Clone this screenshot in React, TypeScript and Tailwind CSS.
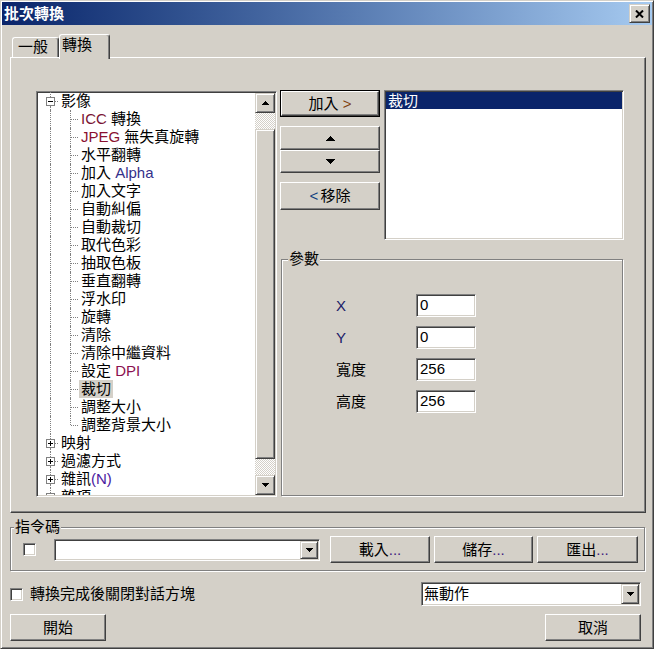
import React from "react";

// classic 3D edges
const raised =
  "border border-t-white border-l-white border-r-[#404040] border-b-[#404040] shadow-[inset_-1px_-1px_#808080]";
const raisedSb =
  "border border-t-[#d4d0c8] border-l-[#d4d0c8] border-r-[#404040] border-b-[#404040] shadow-[inset_1px_1px_#fff,inset_-1px_-1px_#808080]";
const sunken =
  "border border-t-[#808080] border-l-[#808080] border-r-white border-b-white shadow-[inset_1px_1px_#404040,inset_-1px_-1px_#d4d0c8]";
const etched = "border border-[#808080] shadow-[inset_1px_1px_#fff,1px_1px_#fff]";
const dot = "border-dotted border-[#808080]";

function Tri({ dir, w = 7 }: { dir: "up" | "down"; w?: number }) {
  const h = Math.ceil(w / 2);
  const pts = dir === "up" ? `0,${h} ${w},${h} ${w / 2},0` : `0,0 ${w},0 ${w / 2},${h}`;
  return (
    <svg width={w} height={h} viewBox={`0 0 ${w} ${h}`} shapeRendering="crispEdges">
      <polygon points={pts} fill="#000" />
    </svg>
  );
}

function Expander({ open }: { open: boolean }) {
  return (
    <svg width="9" height="9" viewBox="0 0 9 9" shapeRendering="crispEdges">
      <rect x="0.5" y="0.5" width="8" height="8" fill="#fff" stroke="#808080" />
      <line x1="2" y1="4.5" x2="7" y2="4.5" stroke="#000" />
      {!open && <line x1="4.5" y1="2" x2="4.5" y2="7" stroke="#000" />}
    </svg>
  );
}

function RootCell({ open }: { open: boolean }) {
  return (
    <div className="flex h-[18px] w-[20px] shrink-0">
      <div className="w-[8px]" />
      <div className="flex w-[9px] flex-col">
        <div className={`ml-[4px] h-[5px] border-l ${dot}`} />
        <Expander open={open} />
        <div className={`ml-[4px] flex-1 border-l ${dot}`} />
      </div>
      <div className={`mt-[9px] h-0 flex-1 border-t ${dot}`} />
    </div>
  );
}

function ContCell() {
  return (
    <div className="flex h-[18px] w-[20px] shrink-0">
      <div className="w-[12px]" />
      <div className={`border-l ${dot}`} />
    </div>
  );
}

function ChildCell({ last }: { last?: boolean }) {
  return (
    <div className="flex h-[18px] w-[20px] shrink-0">
      <div className="w-[12px]" />
      <div className={`${last ? "h-[9px] self-start" : "self-stretch"} border-l ${dot}`} />
      <div className={`mt-[9px] h-0 flex-1 border-t ${dot}`} />
    </div>
  );
}

const L = ({ c, children }: { c: string; children: React.ReactNode }) => <span className={c}>{children}</span>;

type Row = { t: React.ReactNode; kind: "open" | "closed" | "child" | "last"; sel?: boolean };

const rows: Row[] = [
  { t: "影像", kind: "open" },
  { t: <><L c="text-[#7a1434]">ICC</L> 轉換</>, kind: "child" },
  { t: <><L c="text-[#8a1030]">JPEG</L> 無失真旋轉</>, kind: "child" },
  { t: "水平翻轉", kind: "child" },
  { t: <>加入 <L c="text-[#34308a]">Alpha</L></>, kind: "child" },
  { t: "加入文字", kind: "child" },
  { t: "自動糾偏", kind: "child" },
  { t: "自動裁切", kind: "child" },
  { t: "取代色彩", kind: "child" },
  { t: "抽取色板", kind: "child" },
  { t: "垂直翻轉", kind: "child" },
  { t: "浮水印", kind: "child" },
  { t: "旋轉", kind: "child" },
  { t: "清除", kind: "child" },
  { t: "清除中繼資料", kind: "child" },
  { t: <>設定 <L c="text-[#8a1050]">DPI</L></>, kind: "child" },
  { t: "裁切", kind: "child", sel: true },
  { t: "調整大小", kind: "child" },
  { t: "調整背景大小", kind: "last" },
  { t: "映射", kind: "closed" },
  { t: "過濾方式", kind: "closed" },
  { t: <>雜訊<L c="text-[#4a20a0]">(N)</L></>, kind: "closed" },
  { t: "雜項", kind: "closed" },
];

function Tree() {
  return (
    <div className={`flex h-[406px] w-[241px] shrink-0 bg-white p-[1px] ${sunken}`}>
      <div className="-mt-px flex-1 overflow-hidden">
        {rows.map((r, i) => (
          <div key={i} className="flex h-[18px] items-stretch">
            {r.kind === "open" || r.kind === "closed" ? (
              <RootCell open={r.kind === "open"} />
            ) : (
              <>
                <ContCell />
                <ChildCell last={r.kind === "last"} />
              </>
            )}
            <span
              className={`ml-px whitespace-nowrap px-[2px] leading-[18px] ${r.sel ? "bg-[#d4d0c8]" : ""}`}
            >
              {r.t}
            </span>
          </div>
        ))}
      </div>
      <div className="flex w-[20px] flex-col bg-[#d4d0c8]">
        <div className={`flex h-[20px] items-center justify-center ${raisedSb}`}>
          <Tri dir="up" />
        </div>
        <div className="h-[16px] bg-[repeating-conic-gradient(#fff_0_25%,#d4d0c8_0_50%)] bg-[length:2px_2px]" />
        <div className={`flex-1 ${raisedSb}`} />
        <div className="h-[16px] bg-[repeating-conic-gradient(#fff_0_25%,#d4d0c8_0_50%)] bg-[length:2px_2px]" />
        <div className={`flex h-[20px] items-center justify-center ${raisedSb}`}>
          <Tri dir="down" />
        </div>
      </div>
    </div>
  );
}

function Btn({ children, className = "" }: { children: React.ReactNode; className?: string }) {
  return (
    <div className={`flex items-center justify-center bg-[#d4d0c8] leading-[18px] ${raised} ${className}`}>
      {children}
    </div>
  );
}

function Combo({ text, className = "" }: { text?: string; className?: string }) {
  return (
    <div className={`flex bg-white p-[1px] ${sunken} ${className}`}>
      <div className="flex-1 pl-[1px] leading-[20px]">{text}</div>
      <div className={`flex w-[18px] items-center justify-center bg-[#d4d0c8] ${raisedSb}`}>
        <Tri dir="down" />
      </div>
    </div>
  );
}

function Check() {
  return <div className={`h-[13px] w-[13px] shrink-0 bg-white ${sunken}`} />;
}

const params = [
  { k: <L c="text-[#202068]">X</L>, v: "0" },
  { k: <L c="text-[#202068]">Y</L>, v: "0" },
  { k: "寬度", v: "256" },
  { k: "高度", v: "256" },
];

export default function App() {
  return (
    <div className="h-[649px] w-[654px] bg-[#d4d0c8] font-['Liberation_Sans','Noto_Sans_CJK_TC',sans-serif] text-[15px] text-black">
      <div className={`flex h-full w-full flex-col p-[1px] ${raisedSb}`}>
        {/* title bar */}
        <div className="flex h-[23px] shrink-0 items-center justify-between bg-linear-to-r from-[#0a246a] to-[#a6caf0] pl-[2px] pr-[2px]">
          <span className="font-bold leading-[18px] text-white">批次轉換</span>
          <div className={`flex h-[19px] w-[21px] items-center justify-center bg-[#d4d0c8] ${raisedSb}`}>
            <svg width="9" height="8" viewBox="0 0 9 8">
              <path d="M1 0.5 L8 7.5 M8 0.5 L1 7.5" stroke="#000" strokeWidth="2" />
            </svg>
          </div>
        </div>

        <div className="flex flex-col pl-[8px]">
          {/* tabs */}
          <div className="mt-[9px] flex h-[23px] items-end pl-[2px]">
            <div className="h-[20px] w-[47px] rounded-t-[3px] border-l border-r border-t border-l-white border-r-[#404040] border-t-white pl-[5px] leading-[18px] shadow-[inset_-1px_0_#808080]">
              一般
            </div>
            <div className="relative z-10 -mb-[2px] h-[25px] w-[51px] rounded-t-[3px] border-l border-r border-t border-l-white border-r-[#404040] border-t-white bg-[#d4d0c8] pl-[2px] pt-[1px] leading-[18px] shadow-[inset_-1px_0_#808080]">
              轉換
            </div>
          </div>

          {/* tab page */}
          <div className={`flex h-[456px] w-[636px] pl-[25px] pt-[33px] ${raised}`}>
            <Tree />
            <div className="-mt-px ml-[3px] flex flex-col">
              <div className="flex">
                <div className="flex w-[100px] flex-col">
                  <div className="flex h-[27px] border border-black">
                    <Btn className="flex-1">
                      加入 <L c="ml-[4px] text-[#804010]">&gt;</L>
                    </Btn>
                  </div>
                  <Btn className="mt-[9px] h-[24px]">
                    <Tri dir="up" w={9} />
                  </Btn>
                  <Btn className="h-[23px]">
                    <Tri dir="down" w={9} />
                  </Btn>
                  <Btn className="mt-[9px] h-[28px]">
                    <L c="mr-[2px] text-[#104080]">&lt;</L>移除
                  </Btn>
                </div>
                <div className={`ml-[4px] h-[150px] w-[240px] bg-white p-[1px] ${sunken}`}>
                  <div className="h-[17px] bg-[#0a246a] pl-[2px] leading-[17px] text-white">裁切</div>
                </div>
              </div>

              <fieldset className={`ml-px mt-[10px] h-[246px] w-[342px] ${etched}`}>
                <legend className="ml-[6px] bg-[#d4d0c8] px-[1px] leading-[18px]">參數</legend>
                <div className="flex flex-col gap-[9px] pl-[54px] pt-[26px]">
                  {params.map((p, i) => (
                    <div key={i} className="flex items-center">
                      <div className="w-[80px] leading-[18px]">{p.k}</div>
                      <div className={`h-[23px] w-[60px] bg-white pl-[3px] leading-[19px] ${sunken}`}>{p.v}</div>
                    </div>
                  ))}
                </div>
              </fieldset>
            </div>
          </div>

          {/* script group */}
          <fieldset className={`mt-[5px] h-[53px] w-[635px] ${etched}`}>
            <legend className="ml-[3px] bg-[#d4d0c8] px-[1px] leading-[18px]">指令碼</legend>
            <div className="flex h-[27px] items-center pl-[12px]">
              <Check />
              <Combo className="ml-[18px] h-[22px] w-[266px]" />
              <Btn className="ml-[10px] h-[27px] w-[100px]">
                載入<L c="text-[#402080]">...</L>
              </Btn>
              <Btn className="ml-[4px] h-[27px] w-[99px]">
                儲存<L c="text-[#402080]">...</L>
              </Btn>
              <Btn className="ml-[4px] h-[27px] w-[101px]">
                匯出<L c="text-[#402080]">...</L>
              </Btn>
            </div>
          </fieldset>

          {/* bottom */}
          <div className="mt-[11px] flex h-[24px] w-[636px] items-center">
            <Check />
            <span className="ml-[7px] leading-[18px]">轉換完成後關閉對話方塊</span>
            <Combo text="無動作" className="ml-auto mr-[5px] h-[24px] w-[220px]" />
          </div>
          <div className="mt-[8px] flex w-[636px]">
            <Btn className="h-[27px] w-[96px]">開始</Btn>
            <Btn className="ml-auto mr-[5px] h-[27px] w-[96px]">取消</Btn>
          </div>
        </div>
      </div>
    </div>
  );
}
